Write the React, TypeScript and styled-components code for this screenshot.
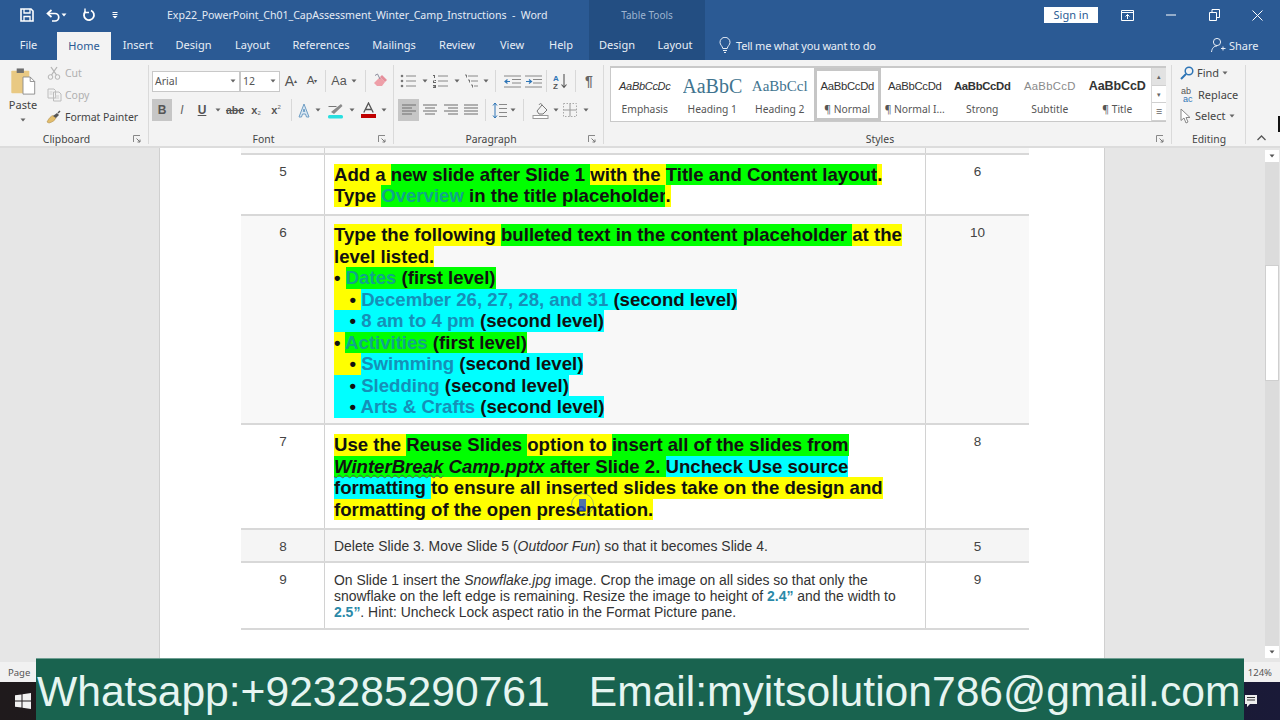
import React from "react";
import styled, { createGlobalStyle } from "styled-components";

const Global = createGlobalStyle`
  html, body { margin: 0; padding: 0; width: 1280px; height: 720px; overflow: hidden; background: #e6e6e6; }
  #root { width: 1280px; height: 720px; }
  * { box-sizing: border-box; }
`;

const UI = `"Noto Sans", "Open Sans", sans-serif`;
const DOC = `"Liberation Sans", Arial, sans-serif`;

const Shell = styled.div`
  position: relative; width: 1280px; height: 720px; display: flex; flex-direction: column;
  overflow: hidden; font-family: ${UI}; color: #444;
`;

/* ---------- title bar ---------- */
const TitleBar = styled.header`
  height: 30px; flex: none; display: flex; align-items: stretch; background: #2b5a94; color: #fff;
`;
const Qat = styled.div`
  width: 167px; flex: none; display: flex; align-items: center; padding-left: 19px;
`;
const QatSlot = styled.span<{ $w: number }>`
  width: ${p => p.$w}px; flex: none; display: flex; justify-content: center; align-items: center;
`;
const DocTitle = styled.div`
  width: 422px; flex: none; font-size: 10.6px; line-height: 30px; color: #e4ebf4; white-space: pre; letter-spacing: -0.03px;
`;
const ContextHead = styled.div`
  width: 116px; flex: none; background: #234e82; font-size: 10px; line-height: 30px; text-align: center; color: #9db4d0;
`;
const SignIn = styled.div`
  margin: 7px 7px 7px 339px; width: 54px; height: 16px; flex: none; background: #fff; color: #2b5a94;
  font-size: 11px; line-height: 16px; text-align: center;
`;
const WinBtn = styled.div<{ $w: number }>`
  width: ${p => p.$w}px; flex: none; display: flex; align-items: center; justify-content: center;
`;

/* ---------- tab row ---------- */
const TabRow = styled.nav`
  height: 30px; flex: none; display: flex; background: #2b5a94; color: #e8eef6; font-size: 11px;
`;
const Tab = styled.div<{ $w: number; $active?: boolean }>`
  width: ${p => p.$w}px; flex: none; text-align: center; line-height: ${p => (p.$active ? "28px" : "30px")};
  ${p => p.$active && `background:#f3f3f3;color:#2b5a94;margin-top:2px;`}
`;
const ContextTabs = styled.div`
  display: flex; width: 116px; flex: none; margin-left: 6px; background: #234e82;
`;
const TellMe = styled.div`
  display: flex; align-items: center; gap: 5px; padding-left: 14px; width: 505px; flex: none; white-space: nowrap;
  font-size: 11px; letter-spacing: -0.2px;
`;
const ShareBox = styled.div`
  display: flex; align-items: center; gap: 3px; font-size: 11px;
`;

/* ---------- ribbon ---------- */
const Ribbon = styled.section`
  height: 88px; flex: none; display: flex; padding-top: 2px; background: #f3f3f3;
  border-bottom: 2px solid #dcdcdc; font-size: 11px; color: #444;
`;
const Group = styled.div<{ $w: number }>`
  width: ${p => p.$w}px; flex: none; display: flex; flex-direction: column; position: relative;
  &::after { content: ""; position: absolute; right: 0; top: 3px; bottom: 2px; width: 1px; background: #dadada; }
`;
const GroupBody = styled.div<{ $pl?: number }>`
  flex: 1; display: flex; padding-left: ${p => p.$pl ?? 0}px; min-height: 0;
`;
const GroupFoot = styled.div`
  height: 14px; flex: none; display: flex; align-items: center; font-size: 10.4px; color: #444;
`;
const FootText = styled.span`
  flex: 1; text-align: center;
`;
const Launcher = styled.span`
  width: 16px; flex: none; display: flex; align-items: center;
`;
const PasteCol = styled.div`
  width: 46px; flex: none; display: flex; flex-direction: column; align-items: center; padding-top: 6px; font-size: 11px; line-height: 14px;
`;
const PasteLabel = styled.span`
  margin: 3px 0 6px;
`;
const ClipList = styled.div`
  display: flex; flex-direction: column;
`;
const ClipRow = styled.div<{ $off?: boolean }>`
  height: 22px; display: flex; align-items: center; gap: 3px; white-space: nowrap; font-size: 10.5px; letter-spacing: -0.05px;
  color: ${p => (p.$off ? "#b0b0b0" : "#444")};
`;
const ClipIcon = styled.span`
  width: 16px; flex: none; display: flex; justify-content: center;
`;
const Rows = styled.div`
  display: flex; flex-direction: column; padding-top: 8px; gap: 7px;
`;
const Row = styled.div`
  height: 22px; display: flex; align-items: center;
`;
const Combo = styled.div<{ $w: number }>`
  width: ${p => p.$w}px; height: 21px; flex: none; background: #fff; border: 1px solid #c8c8c8; display: flex;
  align-items: center; justify-content: space-between; padding: 0 3px 0 2px; font-size: 10.5px; color: #555;
`;
const Tool = styled.span<{ $w: number; $on?: boolean }>`
  width: ${p => p.$w}px; height: 22px; flex: none; display: flex; align-items: center; justify-content: center;
  font-family: ${DOC}; color: #555; background: ${p => (p.$on ? "#c6c6c6" : "transparent")};
`;
const Glyph = styled.span<{ $s?: number; $b?: boolean; $i?: boolean; $u?: boolean; $strike?: boolean; $c?: string }>`
  font-size: ${p => p.$s ?? 11}px; font-weight: ${p => (p.$b ? 700 : 400)}; font-style: ${p => (p.$i ? "italic" : "normal")};
  text-decoration: ${p => (p.$u ? "underline" : p.$strike ? "line-through" : "none")}; color: ${p => p.$c ?? "#555"}; line-height: 1;
`;
const Script = styled.span<{ $up?: boolean }>`
  font-size: 6px; line-height: 1; color: #666; transform: translateY(${p => (p.$up ? -3 : 3)}px);
`;
const Sep = styled.span<{ $w: number }>`
  width: ${p => p.$w}px; height: 22px; flex: none;
  display: flex; justify-content: center;
  &::after { content: ""; width: 1px; height: 100%; background: #d8d8d8; }
`;
const Gallery = styled.div`
  margin: 4px 0 0 6px; width: 556px; height: 56px; flex: none; display: flex; background: #fff; border: 1px solid #c9c9c9; border-top-width: 2px;
`;
const StyleItem = styled.div<{ $on?: boolean }>`
  width: 67.5px; flex: none; display: flex; flex-direction: column; align-items: center; overflow: hidden; white-space: nowrap;
  border: 3px solid ${p => (p.$on ? "#c6c6c6" : "transparent")}; padding: 0 1px;
`;
const Preview = styled.div`
  height: 30px; display: flex; align-items: center; justify-content: center; width: 100%; overflow: hidden;
`;
const PreviewText = styled.span<{ $f?: string; $s: number; $c?: string; $b?: boolean; $i?: boolean; $ls?: number }>`
  font-family: ${p => p.$f ?? DOC}; font-size: ${p => p.$s}px; color: ${p => p.$c ?? "#333"};
  font-weight: ${p => (p.$b ? 700 : 400)}; font-style: ${p => (p.$i ? "italic" : "normal")};
  letter-spacing: ${p => p.$ls ?? 0}px;
`;
const StyleName = styled.div`
  font-size: 10.3px; line-height: 15px; color: #555; margin-top: 1px;
`;
const GalleryScroll = styled.div`
  width: 15px; margin-left: auto; flex: none; display: flex; flex-direction: column; border-left: 1px solid #d8d8d8;
`;
const ScrollCell = styled.div<{ $off?: boolean }>`
  flex: 1; display: flex; align-items: center; justify-content: center; background: ${p => (p.$off ? "#e2e2e2" : "#fff")};
  border-bottom: 1px solid #d0d0d0; font-size: 7px; color: #666;
`;
const EditList = styled.div`
  display: flex; flex-direction: column; padding: 0 0 0 8px;
`;
const EditRow = styled.div`
  height: 21.5px; display: flex; align-items: center; gap: 3px; font-size: 11px; white-space: nowrap;
`;
const Collapse = styled.div`
  flex: 1; display: flex; align-items: flex-end; justify-content: center; padding: 0 4px 5px 0;
`;

/* ---------- document ---------- */
const Workspace = styled.main`
  flex: 1; min-height: 0; display: flex; background: #e6e6e6; position: relative; padding-left: 159px;
`;
const Page = styled.div`
  width: 946px; flex: none; background: #fff; padding-left: 81px; border-left: 1px solid #d0d0d0; border-right: 1px solid #d0d0d0; overflow: hidden;
`;
const TableRow = styled.div<{ $bg?: string }>`
  width: 788px; display: grid; grid-template-columns: 83px 601px 104px; background: ${p => p.$bg ?? "#fff"};
  border-bottom: 2px solid #d8d8d8;
`;
const NumCell = styled.div<{ $pt?: number; $side?: boolean }>`
  text-align: center; font-family: ${DOC}; font-size: 13.5px; line-height: 16px; color: #444; padding-top: ${p => p.$pt ?? 9}px;
  ${p => (p.$side ? "border-left:1px solid #d2d2d2;" : "padding-left:1px;")}
`;
const Stub = styled(NumCell)`
  height: 5px; padding: 0;
`;
const TextCell = styled.div<{ $pt: number; $pb: number }>`
  font-family: ${DOC}; border-left: 1px solid #d2d2d2; padding: ${p => p.$pt}px 4px ${p => p.$pb}px 9px;
`;
const BigLine = styled.div`
  font-size: 18.6px; font-weight: 700; line-height: 21.5px; color: #111; white-space: pre;
`;
const SmallLine = styled.div`
  font-size: 13.95px; line-height: 16px; color: #333; white-space: pre;
`;
const Mark = styled.span<{ $c: string }>`
  background: ${p => p.$c}; padding: 0.4px 0;
`;
const Accent = styled.span<{ $c: string }>`
  color: ${p => p.$c}; font-weight: 700;
`;
const Squiggle = styled.span`
  position: relative; text-decoration: underline wavy #555 1px; text-underline-offset: 1px;
`;
const ScrollBar = styled.div`
  margin-left: auto; margin-right: 1px; width: 14px; flex: none; background: #dcdcdc; margin-top: 2px; margin-bottom: 4px;
  display: flex; flex-direction: column;
`;
const ScrollEnd = styled.div`
  height: 12px; flex: none; background: #fff; display: flex; align-items: center; justify-content: center;
`;
const ScrollThumb = styled.div`
  height: 116px; flex: none; margin-top: 103px; background: #fff; border: 1px solid #cfcfcf;
`;
const ScrollGap = styled.div`
  flex: 1;
`;

/* ---------- status + taskbar ---------- */
const StatusBar = styled.footer`
  height: 20px; flex: none; background: #f1f1f1; display: flex; align-items: center; justify-content: space-between;
  padding: 0 8px; font-size: 9.5px; color: #555;
`;
const Taskbar = styled.footer`
  height: 38px; flex: none; background: linear-gradient(90deg, #1f1a1c 0, #1e1b22 60%, #1a1a38 100%); display: flex; align-items: center;
  justify-content: space-between; padding: 0 23px 0 15px;
`;

/* ---------- overlays ---------- */
const Banner = styled.aside`
  position: absolute; left: 36px; top: 658px; width: 1208px; height: 62px; background: #19634f; border-top: 1px solid #6f9f92;
  display: flex; gap: 39px; padding: 3px 0 0 1px; align-items: center; color: #e6f5f1; font-family: ${DOC}; font-size: 42.6px; white-space: pre; overflow: hidden;
`;
const CursorHalo = styled.div`
  position: absolute; left: 571px; top: 493px; width: 23px; height: 23px; border-radius: 50%; border: 1.5px solid rgba(90,130,170,.55);
  display: flex; align-items: center; justify-content: center;
  &::after { content: ""; width: 7px; height: 12px; background: rgba(40,80,210,.8); }
`;
const EdgeCursor = styled.div`
  position: absolute; right: 0; top: 116px; width: 2px; height: 16px; background: #111;
`;

/* ---------- icons ---------- */
const S = (p: React.SVGProps<SVGSVGElement> & { w: number; h: number }) => {
  const { w, h, ...r } = p;
  return <svg width={w} height={h} viewBox={`0 0 ${w} ${h}`} fill="none" {...r} />;
};
const Caret = ({ c = "#666" }: { c?: string }) => <S w={6} h={4}><path d="M0.5 0.5h5L3 3.5z" fill={c} /></S>;
const SaveIcon = () => <S w={14} h={14}><path d="M1 1h10l2 2v10H1z" stroke="#fff" strokeWidth="1.6" /><path d="M4 1v4h6V1M4 13V8.500h6V13" stroke="#fff" strokeWidth="1.3" /></S>;
const UndoIcon = () => <S w={15} h={13}><path d="M5.500 1L1.500 4.500 5.500 8" stroke="#fff" strokeWidth="1.7" /><path d="M2 4.500h7a3.700 3.700 0 0 1 0 7.500H6" stroke="#fff" strokeWidth="1.7" /></S>;
const RedoIcon = () => <S w={14} h={14}><path d="M9 2.500a5 5 0 1 1-5.500 1" stroke="#fff" strokeWidth="1.8" /><path d="M3 .5v4h4" stroke="#fff" strokeWidth="1.4" /></S>;
const QatMore = () => <S w={6} h={8}><path d="M.5 1.500h5M.5 3.500h5" stroke="#fff" /><path d="M.5 5L3 7.500 5.500 5z" fill="#fff" /></S>;
const BulbIcon = () => <S w={12} h={17}><path d="M3.800 11.500C3.500 9 1 8 1 5.300a5 5 0 0 1 10 0C11 8 8.500 9 8.200 11.500zM4 13.500h4M5 15.500h2" stroke="#e8eef6" strokeWidth="1" /></S>;
const ShareIcon = () => <S w={16} h={16}><circle cx="7" cy="5" r="3.600" stroke="#e8eef6" /><path d="M1.500 15c.5-4 2.500-6 5.500-6M11 11.500h4.500M13 9.500v4" stroke="#e8eef6" /></S>;
const PasteIcon = () => <S w={26} h={27} viewBox="0 0 28 30"><rect x="1" y="3" width="20" height="25" rx="1" fill="#e9c983" /><rect x="7" y="0.500" width="8" height="5" fill="#6e6e6e" /><path d="M14 10h8l5 5v14H14z" fill="#fff" stroke="#8a8a8a" /><path d="M22 10v5h5" stroke="#8a8a8a" /></S>;
const CutIcon = () => <S w={14} h={14}><circle cx="3.500" cy="11" r="2.300" stroke="#b4b4b4" /><circle cx="10.500" cy="11" r="2.300" stroke="#b4b4b4" /><path d="M4.500 9L10 1M9.500 9L4 1" stroke="#b4b4b4" strokeWidth="1.300" /></S>;
const CopyIcon = () => <S w={15} h={14}><path d="M1 1h6l1.500 1.500V10H1zM6.500 4H12l2 2v7H6.500z" fill="#f3f3f3" stroke="#bcbcbc" /><path d="M2.500 4h3M2.500 6h3M8 8h4M8 10h4" stroke="#cfcfcf" /></S>;
const BrushIcon = () => <S w={16} h={14}><path d="M1 12c2-4 4-6 6-6.500L10 8c-1 2-3 4-7 5z" fill="#e3bd6b" stroke="#b08f4a" strokeWidth=".6" /><path d="M7 6l4-3 2 2-3 3z" fill="#555" /><path d="M12 3l2-2" stroke="#555" strokeWidth="1.500" /></S>;
const LaunchIcon = () => <S w={8} h={8}><path d="M.5 7V.5H7" stroke="#888" /><path d="M3.500 3.500L7 7M7 4.500V7H4.500" stroke="#777" /></S>;
const EraserIcon = () => <S w={16} h={16}><path d="M5 13l-3-3 6-6 5 5-3 4z" fill="#ee9fa8" /><path d="M3 2.500L5.500 1 8 6" stroke="#8d8d9d" /><path d="M8 4l5 5 2-2-5-5z" fill="#e58e9a" /></S>;
const OutlineA = () => <S w={14} h={15}><path d="M7 1L2 14h2.500l1-3h3l1 3H12zM6.300 8.500L7 6l.8 2.500z" fill="#dbe8f3" stroke="#6d9dc4" /></S>;
const HighlightIcon = () => <S w={18} h={17}><path d="M4 10L14 2l1.500 2L7 12z" fill="#8a8a8a" /><path d="M1.500 4.500h8" stroke="#777" /><rect x="1" y="13" width="15" height="3.500" rx="1.500" fill="#28dfe0" /></S>;
const FontColorIcon = () => <S w={15} h={16}><path d="M2.800 10.500L7.500 1l4.700 9.500M4.500 7.500h6" stroke="#555" strokeWidth="1.300" /><rect x="0" y="12" width="15" height="4" fill="#c00000" /></S>;
const BulletsIcon = () => <S w={17} h={14}><g fill="#777"><circle cx="2" cy="2" r="1.300" /><circle cx="2" cy="7" r="1.300" /><circle cx="2" cy="12" r="1.300" /></g><path d="M6 2h10M6 7h10M6 12h10" stroke="#888" /></S>;
const NumberIcon = () => <S w={17} h={14}><g fill="#666"><path d="M1 1h2v3H2V2H1zM1 6h3v1H2v1h2v1H1V7h2V6.500H1zM1 11h3v3H1v-1h2v-.3H1.500v-.6H3V12H1z" /></g><path d="M6 2h10M6 7h10M6 12h10" stroke="#888" /></S>;
const MultiIcon = () => <S w={15} h={15}><path d="M4 2h10M7 7h7M10 12h4" stroke="#888" /><path d="M1 1h1.500v2.500M4 6h1.500v2.500M7 11h1.500v2.500" stroke="#666" strokeWidth=".9" /></S>;
const IndentIcon = ({ flip }: { flip?: boolean }) => <S w={17} h={13}><path d="M0 1h17M8 4.500h9M8 8h9M0 12h17" stroke="#888" /><path d={flip ? "M1 6.500h5M4 4.500l2.500 2-2.500 2" : "M6 6.500H1M3.500 4.500L1 6.500l2.500 2"} stroke="#2e75b6" strokeWidth="1.200" /></S>;
const SortIcon = () => <S w={15} h={16}><text x="0" y="7.500" fontSize="8" fontWeight="700" fontFamily={DOC} fill="#2e75b6">A</text><text x="0" y="15.500" fontSize="8" fontWeight="700" fontFamily={DOC} fill="#555">Z</text><path d="M11 1v13M8.500 11.500L11 14.500l2.500-3" stroke="#555" strokeWidth="1.100" /></S>;
const AlignIcon = ({ kind }: { kind: "l" | "c" | "r" | "j" }) => {
  const line = (y: number, w: number) => {
    const x = kind === "l" || kind === "j" ? 1 : kind === "c" ? (16 - w) / 2 : 15 - w;
    return <path key={y} d={`M${x} ${y}h${kind === "j" ? 14 : w}`} stroke="#777" strokeWidth="1.100" />;
  };
  return <S w={16} h={12}>{line(1, 14)}{line(4, 10)}{line(7, 14)}{line(10, 10)}</S>;
};
const SpacingIcon = () => <S w={15} h={17}><path d="M7 2.500h8M7 6.500h8M7 10.500h8M7 14.500h8" stroke="#888" /><path d="M3 1v15M1 3.500L3 1l2 2.500M1 13.500L3 16l2-2.500" stroke="#2e75b6" /></S>;
const ShadeIcon = () => <S w={18} h={17}><path d="M5 9l5-6 5 5-4 4H7z" fill="#f3f3f3" stroke="#777" /><path d="M7 3c1-2 3-2 3 1" stroke="#777" /><rect x="1" y="13.500" width="15" height="3" fill="#fff" stroke="#999" /></S>;
const BordersIcon = () => <S w={14} h={14}><rect x=".5" y=".5" width="13" height="13" stroke="#aaa" strokeDasharray="1.500 1.500" /><path d="M7 .5v13M.5 7h13" stroke="#999" /></S>;
const FindIcon = () => <S w={14} h={14}><circle cx="9" cy="5" r="3.800" stroke="#2e75b6" strokeWidth="1.500" /><path d="M6 8l-5 5" stroke="#2e75b6" strokeWidth="2" /></S>;
const ReplaceIcon = () => <S w={15} h={15}><text x="1" y="7" fontSize="9" fontFamily={DOC} fill="#555">ab</text><text x="3" y="14.500" fontSize="9" fontFamily={DOC} fill="#2e75b6">ac</text></S>;
const SelectIcon = () => <S w={12} h={16}><path d="M1 1v11.500l3-2.500 2 5 2-1-2-4.500h4z" fill="#fff" stroke="#888" /></S>;
const Chevron = ({ up }: { up?: boolean }) => <S w={9} h={6}><path d={up ? "M.5 5L4.500 1l4 4" : "M.5 1l4 4 4-4"} stroke="#555" strokeWidth="1.300" /></S>;
const WinLogo = () => <S w={16} h={16}><path d="M0 2.300l6.500-.9v6.100H0zM7.500 1.300L16 0v7.500H7.500zM0 8.500h6.500v6.100L0 13.700zM7.500 8.500H16V16l-8.500-1.300z" fill="#f2f2f2" /></S>;
const NoteIcon = () => <S w={12} h={14}><path d="M0 1h12v9H5l-3 3v-3H0z" fill="#eee" /><path d="M2 3.500h8M2 6h8" stroke="#333" /></S>;

const tabs: [string, number][] = [["File", 57], ["Home", 54], ["Insert", 54], ["Design", 57], ["Layout", 61], ["References", 76], ["Mailings", 70], ["Review", 56], ["View", 54], ["Help", 44]];

const Y = "#ffff00", G = "#00ff00", C = "#00ffff";
const onG = "#10a58a", onC = "#1590b8";

const styleItems = [
  { p: <PreviewText $s={11} $i $ls={-0.3}>AaBbCcDc</PreviewText>, n: "Emphasis" },
  { p: <PreviewText $f={`"Liberation Serif", serif`} $s={20} $c="#41748f">AaBbC</PreviewText>, n: "Heading 1" },
  { p: <PreviewText $f={`"Liberation Serif", serif`} $s={15} $c="#41748f">AaBbCcl</PreviewText>, n: "Heading 2" },
  { p: <PreviewText $s={11.3} $ls={-0.3}>AaBbCcDd</PreviewText>, n: "¶ Normal", on: true },
  { p: <PreviewText $s={11.3} $ls={-0.3}>AaBbCcDd</PreviewText>, n: "¶ Normal I..." },
  { p: <PreviewText $s={11.3} $b $ls={-0.3}>AaBbCcDd</PreviewText>, n: "Strong" },
  { p: <PreviewText $s={11.3} $c="#8a8a8a" $ls={0.3}>AaBbCcD</PreviewText>, n: "Subtitle" },
  { p: <PreviewText $s={12.5} $b $ls={-0.1}>AaBbCcD</PreviewText>, n: "¶ Title" },
];

export default function App() {
  return (
    <Shell>
      <Global />
      <TitleBar>
        <Qat>
          <QatSlot $w={16}><SaveIcon /></QatSlot>
          <QatSlot $w={10} />
          <QatSlot $w={16}><UndoIcon /></QatSlot>
          <QatSlot $w={6}><Caret c="#fff" /></QatSlot>
          <QatSlot $w={14} />
          <QatSlot $w={16}><RedoIcon /></QatSlot>
          <QatSlot $w={10} />
          <QatSlot $w={16}><QatMore /></QatSlot>
        </Qat>
        <DocTitle>Exp22_PowerPoint_Ch01_CapAssessment_Winter_Camp_Instructions  -  Word</DocTitle>
        <ContextHead>Table Tools</ContextHead>
        <SignIn>Sign in</SignIn>
        <WinBtn $w={44}><S w={13} h={11}><path d="M.5.5h12v10H.5zM.5 2.500h12" stroke="#fff" /><path d="M6.500 9V4.500M4.500 6.500l2-2 2 2" stroke="#fff" /></S></WinBtn>
        <WinBtn $w={44}><S w={10} h={2}><path d="M0 1h10" stroke="#fff" /></S></WinBtn>
        <WinBtn $w={43}><S w={11} h={12}><path d="M.5 3.500h7v8h-7zM3 3.500V.5h7.500v8h-3" stroke="#fff" /></S></WinBtn>
        <WinBtn $w={43}><S w={11} h={11}><path d="M.5.5l10 10M10.500.5l-10 10" stroke="#fff" /></S></WinBtn>
      </TitleBar>

      <TabRow>
        {tabs.map(([t, w]) => <Tab key={t} $w={w} $active={t === "Home"}>{t}</Tab>)}
        <ContextTabs>
          <Tab $w={56}>Design</Tab>
          <Tab $w={60}>Layout</Tab>
        </ContextTabs>
        <TellMe><BulbIcon />Tell me what you want to do</TellMe>
        <ShareBox><ShareIcon />Share</ShareBox>
      </TabRow>

      <Ribbon>
        <Group $w={149}>
          <GroupBody $pl={0}>
            <PasteCol><PasteIcon /><PasteLabel>Paste</PasteLabel><Caret /></PasteCol>
            <ClipList>
              <ClipRow $off><ClipIcon><CutIcon /></ClipIcon>Cut</ClipRow>
              <ClipRow $off><ClipIcon><CopyIcon /></ClipIcon>Copy</ClipRow>
              <ClipRow><ClipIcon><BrushIcon /></ClipIcon>Format Painter</ClipRow>
            </ClipList>
          </GroupBody>
          <GroupFoot><FootText>Clipboard</FootText><Launcher><LaunchIcon /></Launcher></GroupFoot>
        </Group>

        <Group $w={245}>
          <GroupBody $pl={3}>
            <Rows>
              <Row>
                <Combo $w={88}>Arial<Caret /></Combo>
                <Combo $w={40}>12<Caret /></Combo>
                <Tool $w={22}><Glyph $s={14}>A</Glyph><Glyph $s={6}>▴</Glyph></Tool>
                <Tool $w={20}><Glyph $s={11.500}>A</Glyph><Glyph $s={6}>▾</Glyph></Tool>
                <Sep $w={7} />
                <Tool $w={20}><Glyph $s={12.500}>Aa</Glyph></Tool>
                <Tool $w={10}><Caret /></Tool>
                <Sep $w={12} />
                <Tool $w={18}><EraserIcon /></Tool>
              </Row>
              <Row>
                <Tool $w={20} $on><Glyph $s={12} $b>B</Glyph></Tool>
                <Tool $w={20}><Glyph $s={12} $i $c="#666">I</Glyph></Tool>
                <Tool $w={20}><Glyph $s={12} $b $u>U</Glyph></Tool>
                <Tool $w={12}><Caret /></Tool>
                <Tool $w={22}><Glyph $s={10.500} $b $strike>abc</Glyph></Tool>
                <Tool $w={20}><Glyph $s={11} $b>x</Glyph><Script>2</Script></Tool>
                <Tool $w={20}><Glyph $s={11} $b>x</Glyph><Script $up>2</Script></Tool>
                <Sep $w={10} />
                <Tool $w={16}><OutlineA /></Tool>
                <Tool $w={12}><Caret /></Tool>
                <Tool $w={23}><HighlightIcon /></Tool>
                <Tool $w={10}><Caret /></Tool>
                <Tool $w={22}><FontColorIcon /></Tool>
                <Tool $w={10}><Caret /></Tool>
              </Row>
            </Rows>
          </GroupBody>
          <GroupFoot><FootText>Font</FootText><Launcher><LaunchIcon /></Launcher></GroupFoot>
        </Group>

        <Group $w={210}>
          <GroupBody $pl={4}>
            <Rows>
              <Row>
                <Tool $w={21}><BulletsIcon /></Tool>
                <Tool $w={11}><Caret /></Tool>
                <Tool $w={21}><NumberIcon /></Tool>
                <Tool $w={11}><Caret /></Tool>
                <Tool $w={19}><MultiIcon /></Tool>
                <Tool $w={9}><Caret /></Tool>
                <Sep $w={11} />
                <Tool $w={22}><IndentIcon /></Tool>
                <Tool $w={20}><IndentIcon flip /></Tool>
                <Sep $w={7} />
                <Tool $w={21}><SortIcon /></Tool>
                <Sep $w={8} />
                <Tool $w={20}><Glyph $s={14} $b $c="#666">¶</Glyph></Tool>
              </Row>
              <Row>
                <Tool $w={21} $on><AlignIcon kind="l" /></Tool>
                <Tool $w={21}><AlignIcon kind="c" /></Tool>
                <Tool $w={21}><AlignIcon kind="r" /></Tool>
                <Tool $w={20}><AlignIcon kind="j" /></Tool>
                <Sep $w={8} />
                <Tool $w={20}><SpacingIcon /></Tool>
                <Tool $w={8}><Caret /></Tool>
                <Sep $w={13} />
                <Tool $w={22}><ShadeIcon /></Tool>
                <Tool $w={8}><Caret /></Tool>
                <Tool $w={20}><BordersIcon /></Tool>
                <Tool $w={12}><Caret /></Tool>
              </Row>
            </Rows>
          </GroupBody>
          <GroupFoot><FootText>Paragraph</FootText><Launcher><LaunchIcon /></Launcher></GroupFoot>
        </Group>

        <Group $w={568}>
          <GroupBody>
            <Gallery>
              {styleItems.map(s => (
                <StyleItem key={s.n} $on={s.on}>
                  <Preview>{s.p}</Preview>
                  <StyleName>{s.n}</StyleName>
                </StyleItem>
              ))}
              <GalleryScroll>
                <ScrollCell $off>▴</ScrollCell>
                <ScrollCell>▾</ScrollCell>
                <ScrollCell>☰</ScrollCell>
              </GalleryScroll>
            </Gallery>
          </GroupBody>
          <GroupFoot><FootText>Styles</FootText><Launcher><LaunchIcon /></Launcher></GroupFoot>
        </Group>

        <Group $w={74}>
          <GroupBody>
            <EditList>
              <EditRow><FindIcon />Find <Caret /></EditRow>
              <EditRow><ReplaceIcon />Replace</EditRow>
              <EditRow><SelectIcon />Select<Caret /></EditRow>
            </EditList>
          </GroupBody>
          <GroupFoot><FootText>Editing</FootText></GroupFoot>
        </Group>
        <Collapse><Chevron up /></Collapse>
      </Ribbon>

      <Workspace>
        <Page>
          <TableRow $bg="#f8f8f8"><Stub /><Stub $side /><Stub $side /></TableRow>

          <TableRow>
            <NumCell>5</NumCell>
            <TextCell $pt={9} $pb={6.600}>
              <BigLine><Mark $c={Y}>Add a </Mark><Mark $c={G}>new slide after Slide 1 </Mark><Mark $c={Y}>with the </Mark><Mark $c={G}>Title and Content layout</Mark><Mark $c={Y}>.</Mark></BigLine>
              <BigLine><Mark $c={Y}>Type </Mark><Mark $c={G}><Accent $c={onG}>Overview</Accent> in the title placeholder</Mark><Mark $c={Y}>.</Mark></BigLine>
            </TextCell>
            <NumCell $side>6</NumCell>
          </TableRow>

          <TableRow $bg="#f8f8f8">
            <NumCell>6</NumCell>
            <TextCell $pt={9} $pb={5.400}>
              <BigLine><Mark $c={Y}>Type the following </Mark><Mark $c={G}>bulleted text in the content placeholder </Mark><Mark $c={Y}>at the</Mark></BigLine>
              <BigLine><Mark $c={Y}>level listed.</Mark></BigLine>
              <BigLine><Mark $c={Y}>• </Mark><Mark $c={G}><Accent $c={onG}>Dates</Accent> (first level)</Mark></BigLine>
              <BigLine><Mark $c={Y}>   • </Mark><Mark $c={C}><Accent $c={onC}>December 26, 27, 28, and 31</Accent> (second level)</Mark></BigLine>
              <BigLine><Mark $c={C}>   • <Accent $c={onC}>8 am to 4 pm</Accent> (second level)</Mark></BigLine>
              <BigLine><Mark $c={Y}>• </Mark><Mark $c={G}><Accent $c={onG}>Activities</Accent> (first level)</Mark></BigLine>
              <BigLine><Mark $c={Y}>   • </Mark><Mark $c={C}><Accent $c={onC}>Swimming</Accent> (second level)</Mark></BigLine>
              <BigLine><Mark $c={C}>   • <Accent $c={onC}>Sledding</Accent> (second level)</Mark></BigLine>
              <BigLine><Mark $c={C}>   • <Accent $c={onC}>Arts &amp; Crafts</Accent> (second level)</Mark></BigLine>
            </TextCell>
            <NumCell $side>10</NumCell>
          </TableRow>

          <TableRow>
            <NumCell>7</NumCell>
            <TextCell $pt={9} $pb={7.900}>
              <BigLine><Mark $c={Y}>Use the </Mark><Mark $c={G}>Reuse Slides </Mark><Mark $c={Y}>option to </Mark><Mark $c={G}>insert all of the slides from</Mark></BigLine>
              <BigLine><Mark $c={G}><em><Squiggle>WinterBreak</Squiggle> Camp.pptx</em> after Slide 2. </Mark><Mark $c={C}>Uncheck Use source</Mark></BigLine>
              <BigLine><Mark $c={C}>formatting </Mark><Mark $c={Y}>to ensure all inserted slides take on the design and</Mark></BigLine>
              <BigLine><Mark $c={Y}>formatting of the open presentation.</Mark></BigLine>
            </TextCell>
            <NumCell $side>8</NumCell>
          </TableRow>

          <TableRow $bg="#f5f5f5">
            <NumCell>8</NumCell>
            <TextCell $pt={8} $pb={7}>
              <SmallLine>Delete Slide 3. Move Slide 5 (<em>Outdoor Fun</em>) so that it becomes Slide 4.</SmallLine>
            </TextCell>
            <NumCell $side>5</NumCell>
          </TableRow>

          <TableRow>
            <NumCell>9</NumCell>
            <TextCell $pt={9} $pb={8}>
              <SmallLine>On Slide 1 insert the <em>Snowflake.jpg</em> image. Crop the image on all sides so that only the</SmallLine>
              <SmallLine>snowflake on the left edge is remaining. Resize the image to height of <Accent $c="#2b89a8">2.4”</Accent> and the width to</SmallLine>
              <SmallLine><Accent $c="#2b89a8">2.5”</Accent>. Hint: Uncheck Lock aspect ratio in the Format Picture pane.</SmallLine>
            </TextCell>
            <NumCell $side>9</NumCell>
          </TableRow>
        </Page>

        <ScrollBar>
          <ScrollEnd><Caret c="#555" /></ScrollEnd>
          <ScrollThumb />
          <ScrollGap />
          <ScrollEnd><Caret c="#555" /></ScrollEnd>
        </ScrollBar>
      </Workspace>

      <StatusBar><span>Page</span><span>124%</span></StatusBar>
      <Taskbar><WinLogo /><NoteIcon /></Taskbar>

      <Banner><span>Whatsapp:+923285290761</span><span>Email:myitsolution786@gmail.com</span></Banner>
      <CursorHalo />
      <EdgeCursor />
    </Shell>
  );
}
